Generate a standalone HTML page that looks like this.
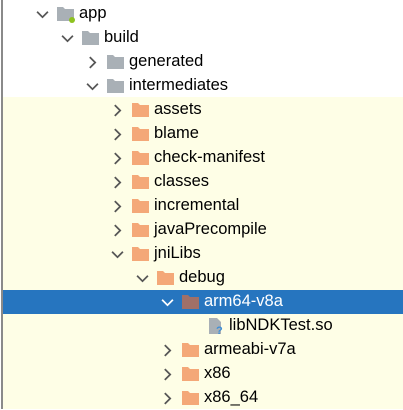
<!DOCTYPE html>
<html><head><style>
body{margin:0;width:403px;height:409px;overflow:hidden;background:#fff;font-family:"Liberation Sans","Noto Sans CJK SC",sans-serif;font-size:16.5px;color:#000;position:relative}
.bar{position:absolute;left:1px;top:0;width:2px;height:409px;background:#8a8a8a}
.yel{position:absolute;left:3px;top:97px;right:0;bottom:0;background:#fefee6}
.row{position:absolute;left:3px;right:0;height:24px}
.sel{background:#2675bf;color:#fff}
.ar{position:absolute;top:6px;width:13px;height:13px}
.fd{position:absolute;top:5px;width:17px;height:14px}
.tx{position:absolute;top:2px;line-height:19px;white-space:nowrap}
</style></head><body>
<div class="bar"></div><div class="yel"></div>
<div id="t"></div>
<script>
var rows=[["app",0,"d","g",1],["build",1,"d","g"],["generated",2,"r","g"],["intermediates",2,"d","g"],
["assets",3,"r","o"],["blame",3,"r","o"],["check-manifest",3,"r","o"],["classes",3,"r","o"],["incremental",3,"r","o"],
["javaPrecompile",3,"r","o"],["jniLibs",3,"d","o"],["debug",4,"d","o"],["arm64-v8a",5,"d","b"],["libNDKTest.so",6,"n","f"],
["armeabi-v7a",5,"r","o"],["x86",5,"r","o"],["x86_64",5,"r","o"]];
var h="";
rows.forEach(function(r,i){
var top=2+i*24, x=40+r[1]*25, sel=r[0]=="arm64-v8a";
var ac=sel?"#fff":"#555";
h+='<div class="row'+(sel?' sel':'')+'" style="top:'+top+'px">';
if(r[2]=="d")h+='<svg class="ar" style="left:'+(x-7)+'px" viewBox="0 0 12 12"><path d="M1 3.5L6 8.5L11 3.5" fill="none" stroke="'+ac+'" stroke-width="1.6"/></svg>';
if(r[2]=="r")h+='<svg class="ar" style="left:'+(x-7)+'px" viewBox="0 0 12 12"><path d="M3.5 1L8.5 6L3.5 11" fill="none" stroke="'+ac+'" stroke-width="1.6"/></svg>';
var fx=x+14;
if(r[3]=="f"){h+='<svg class="fd" style="left:'+fx+'px;top:3px;height:18px" viewBox="0 0 17 18"><path d="M2 1H10L14 5V17H2Z" fill="#a9b0b6"/><text x="9" y="17" font-size="11" font-weight="bold" fill="#3d8fd8" font-family="Liberation Sans">?</text></svg>';}
else{var c=r[3]=="g"?"#a9b0b6":r[3]=="o"?"#f4a878":"#a07068";
h+='<svg class="fd" style="left:'+fx+'px" viewBox="0 0 17 14"><path d="M0 0H6L8 2H17V14H0Z" fill="'+c+'"/></svg>';
if(r[4])h+='<div style="position:absolute;left:'+(fx+12)+'px;top:15px;width:6px;height:6px;border-radius:50%;background:#8dc21f"></div>';}
h+='<span class="tx" style="left:'+(fx+22)+'px">'+r[0]+'</span></div>';
});
document.getElementById("t").innerHTML=h;
</script>
</body></html>
